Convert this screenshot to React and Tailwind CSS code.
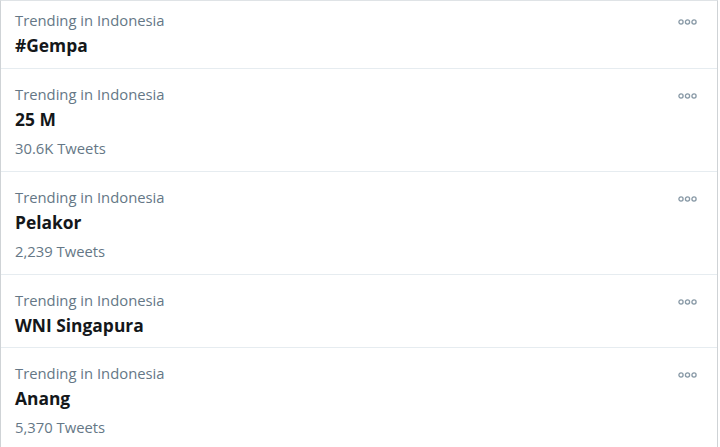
const trends = [
  { name: '#Gempa', cut: true },
  { name: '25 M', tweets: '30.6K Tweets' },
  { name: 'Pelakor', tweets: '2,239 Tweets' },
  { name: 'WNI Singapura' },
  { name: 'Anang', tweets: '5,370 Tweets' },
];

function Dots() {
  return (
    <svg width="19" height="6" viewBox="0 0 19 6" className="text-[#8899a6]">
      <circle cx="3" cy="3" r="2.1" fill="none" stroke="currentColor" strokeWidth="1.3" />
      <circle cx="9.5" cy="3" r="2.1" fill="none" stroke="currentColor" strokeWidth="1.3" />
      <circle cx="16" cy="3" r="2.1" fill="none" stroke="currentColor" strokeWidth="1.3" />
    </svg>
  );
}

export default function App() {
  return (
    <div className="w-[720px] h-[447px] overflow-hidden bg-white font-['Open_Sans',sans-serif]">
      <div className="w-[718px] border border-[#cfd3d6] border-t-[#dfe3e6]">
        {trends.map((t, i) => (
          <div
            key={i}
            className={`flex justify-between border-b border-[#e6ecf0] pl-[14px] pr-[20px] ${t.cut ? 'pt-[9px] pb-[11px]' : t.tweets ? 'pt-[15px] pb-[13px]' : 'pt-[15px] pb-[10px]'}`}
          >
            <div>
              <div className="text-[14.8px] leading-[20px] text-[#657786]">Trending in Indonesia</div>
              <div className="mt-[3px] text-[17.4px] leading-[24px] font-bold text-[#14171a]">{t.name}</div>
              {t.tweets && (
                <div className="mt-[7px] text-[14.8px] leading-[20px] text-[#657786]">{t.tweets}</div>
              )}
            </div>
            <div className="pt-[9px]">
              <Dots />
            </div>
          </div>
        ))}
      </div>
    </div>
  );
}
